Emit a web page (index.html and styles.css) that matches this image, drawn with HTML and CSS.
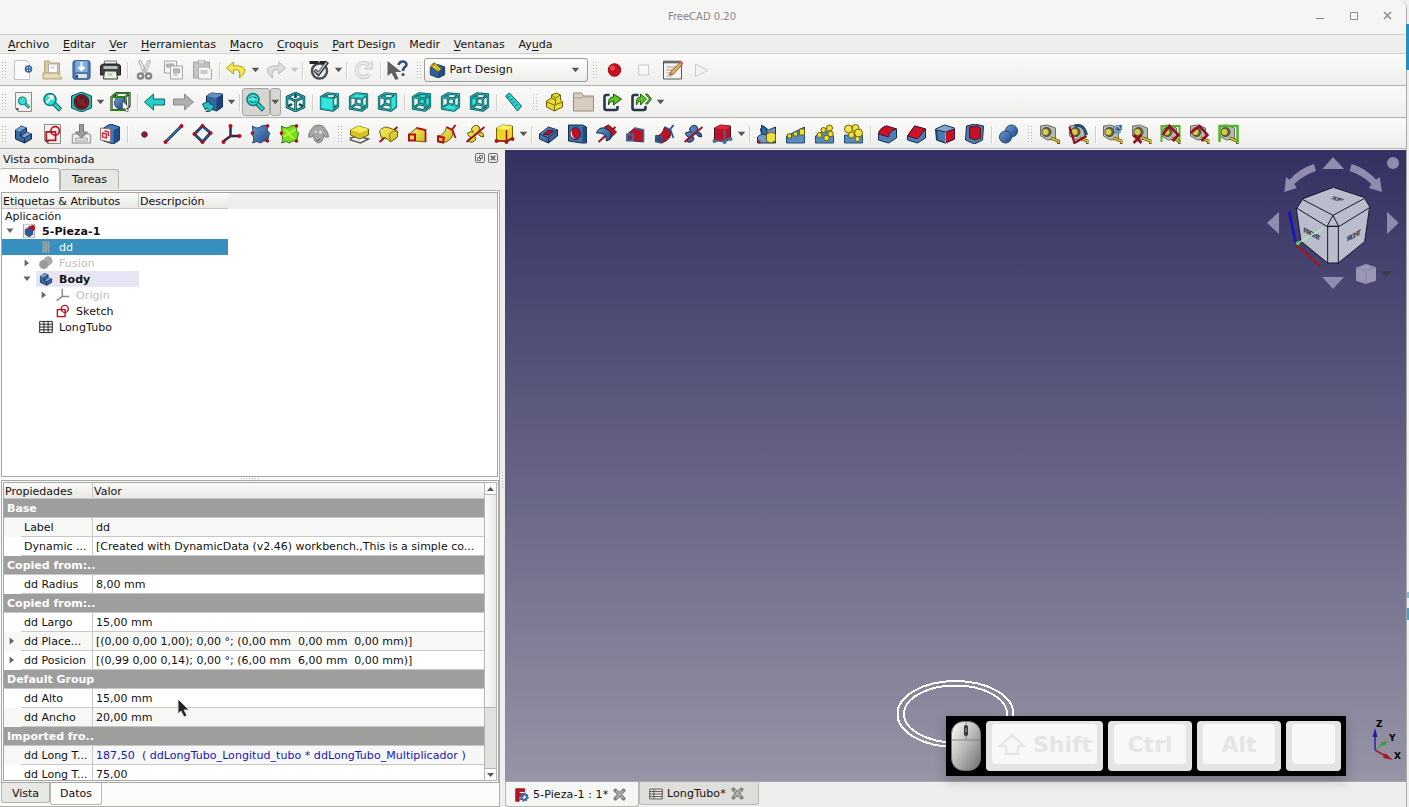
FILE: index.html
```html
<!DOCTYPE html>
<html lang="es">
<head>
<meta charset="utf-8">
<title>FreeCAD 0.20</title>
<link rel="stylesheet" href="styles.css">
</head>
<body>
<svg class="defs" width="0" height="0">
<defs>
<linearGradient id="gy" x2="1" y2="1"><stop offset="0" stop-color="#fcf36a"/><stop offset="1" stop-color="#c9b81a"/></linearGradient>
<linearGradient id="gb" x2="1" y2="1"><stop offset="0" stop-color="#6b9bd0"/><stop offset="1" stop-color="#204a87"/></linearGradient>
<linearGradient id="gm" x2="1" y2="1"><stop offset="0" stop-color="#fff"/><stop offset=".5" stop-color="#b8b8b6"/><stop offset="1" stop-color="#6d6d6b"/></linearGradient>
<symbol id="new" viewBox="0 0 20 20"><path d="M1 .5h12l3 3v16H1z" fill="#fbfbfb" stroke="#c4c4c2"/><circle cx="15" cy="9" r="3" fill="#fff" stroke="#3c6499" stroke-width="1.600"/><path d="M15 6v6M12 9h6" stroke="#3c6499" stroke-width="1.500"/></symbol>
<symbol id="open" viewBox="0 0 20 20"><path d="M2 1h5l1 2h9v12H2z" fill="#d9c9a2" stroke="#b5a37a"/><path d="M6 4h9v9H6z" fill="#fff" stroke="#aaa"/><path d="M8 6h4v3H8z" fill="#ddd"/><path d="M.5 13h15l4 6h-19z" fill="#e2d3ae" stroke="#b5a37a"/><path d="M2 16h15" stroke="#fff" stroke-dasharray="1 1"/></symbol>
<symbol id="save" viewBox="0 0 20 20"><rect x="1.500" y=".7" width="17" height="18.500" rx="2" fill="#4a80bd" stroke="#234a7e"/><path d="M4 1h12v11H4z" fill="#86add8"/><path d="M10 2v7M7 7l3 3 3-3" fill="none" stroke="#fff" stroke-width="2"/><path d="M4 13.500h12v5H4z" fill="#dfe5ec" stroke="#2d5387" stroke-width=".7"/><path d="M5.500 15v3" stroke="#204a87" stroke-width="2"/></symbol>
<symbol id="print" viewBox="0 0 20 20"><path d="M4 1h12v6H4z" fill="#eee" stroke="#777"/><path d="M0 6q1-2 3-2h14q2 0 3 2v9H0z" fill="#3c4042" stroke="#1d1f20"/><path d="M3 6h14v3H3z" fill="#bbb"/><path d="M4 11h12l1 8H3z" fill="#edf3e9" stroke="#333"/><path d="M7 13l5 3M12 13l-5 3" stroke="#9bc782" stroke-width="1"/></symbol>
<symbol id="cut" viewBox="0 0 20 20"><path d="M4 1l2-1 5 10-2 3zM16 1l-2-1L9 10l2 3z" fill="#ededec" stroke="#aaa"/><g fill="none" stroke="#858585" stroke-width="2.500"><circle cx="6" cy="16" r="2.600"/><circle cx="14" cy="16" r="2.600"/></g></symbol>
<symbol id="copy" viewBox="0 0 20 20"><g fill="#f5f5f5" stroke="#a5a5a3"><path d="M1 1h12v12H1z"/><path d="M3 4h7v3H3z" fill="#bbb"/><path d="M7 6h12v13H7z"/><path d="M10 9h6v4h-6z" fill="#bbb"/><path d="M10 15h4"/></g></symbol>
<symbol id="paste" viewBox="0 0 20 20"><path d="M1 2h16v16H1z" fill="#c6c6c4" stroke="#a0a09e"/><path d="M6 0h6v4H6z" fill="#ddd" stroke="#aaa"/><path d="M6 7h10l3 3v9H6z" fill="#f4f4f4" stroke="#aaa"/><path d="M8 10h7v4H8z" fill="#c9c9c8"/></symbol>
<symbol id="undo" viewBox="0 0 20 20"><path d="M7 2L0 8l7 6v-4q8-2 6 8 9-8 3-11-4-2-9-1z" fill="#f4e45c" stroke="#b4a000"/></symbol>
<symbol id="redo" viewBox="0 0 20 20"><path d="M13 2l7 6-7 6v-4q-8-2-6 8-9-8-3-11 4-2 9-1z" fill="#dededd" stroke="#b5b5b4"/></symbol>
<symbol id="valid" viewBox="0 0 20 20"><circle cx="10" cy="11" r="7.500" fill="#f0f0ef" stroke="#484e53" stroke-width="2.400"/><path d="M0 1h9v3H0zM10 1l7 0v3h-7z" fill="#22272b"/><path d="M5 10l4 4 9-12" fill="none" stroke="#31373b" stroke-width="3.600"/><path d="M5.500 10.500l3.500 3 8-11" fill="none" stroke="#b9bdbf" stroke-width="1.500"/></symbol>
<symbol id="refresh" viewBox="0 0 20 20"><path d="M15 5A7 7 0 1 0 16 14" fill="none" stroke="#cbcbca" stroke-width="4"/><path d="M15 5A7 7 0 1 0 16 14" fill="none" stroke="#ececeb" stroke-width="2"/><path d="M11 9h8V1z" fill="#e9e9e8" stroke="#cbcbca"/></symbol>
<symbol id="what" viewBox="0 0 20 20"><path d="M0 1v15l4-3 4 7 3-1-3-7h6z" fill="#5e6161"/><path d="M11 5q1-4 5-3.500 4 1 2.500 4.500-3 2-3 5" fill="none" stroke="#31517b" stroke-width="2.600"/><circle cx="15.500" cy="14.500" r="1.600" fill="#31517b"/></symbol>
<symbol id="rec" viewBox="0 0 20 20"><circle cx="10" cy="10" r="6.300" fill="#cc0c1f" stroke="#981020"/><circle cx="8" cy="8" r="2.500" fill="#e34a50"/></symbol>
<symbol id="stop" viewBox="0 0 20 20"><path d="M5 5h10v10H5z" fill="#f8f8f7" stroke="#c9c9c8"/></symbol>
<symbol id="macro" viewBox="0 0 20 20"><path d="M1 2h18v17H1z" fill="#f4f4f2" stroke="#555"/><path d="M1 2h18" stroke="#333" stroke-width="3" stroke-dasharray="1 1"/><path d="M4 7h9M4 10h7M4 13h4M4 16h6" stroke="#999"/><path d="M7 15l2-4 9-9 2 2-9 10z" fill="#e9b06a" stroke="#8b5a18"/><path d="M17 3l2-2 2 2-2 2z" fill="#d66"/></symbol>
<symbol id="play" viewBox="0 0 20 20"><path d="M4 4l12 6.500-12 6z" fill="#f3f3f2" stroke="#c9c9c8"/></symbol>
<symbol id="pdcube" viewBox="0 0 20 20"><path d="M1 7l9-4 9 3v10l-8 4-10-4z" fill="#315f9b" stroke="#102845"/><path d="M11 9l8-3v10l-8 4z" fill="#214a84"/><path d="M1 5l5-4 9 8-4 3z" fill="#eedb39" stroke="#675800"/><path d="M4 2l8 8M7 1L3 6" stroke="#675800"/></symbol>
<symbol id="mag" viewBox="0 0 20 20"><path d="M11 11l7 7" stroke="#0b5f60" stroke-width="4.600"/><path d="M11 11l6.500 6.500" stroke="#29cfca" stroke-width="2.800"/><circle cx="7.500" cy="7.500" r="6" fill="#35ddd6" stroke="#12797a" stroke-width="1.600"/></symbol>
<symbol id="fit" viewBox="0 0 20 20"><path d="M2 .5h16v19H5l-3-3z" fill="#f0f0ef" stroke="#8b8b89"/><path d="M2 16h3v3.500z" fill="#555"/><use href="#mag" x="4" y="4" width="13" height="13"/></symbol>
<symbol id="fitsel" viewBox="0 0 20 20"><use href="#mag"/><path d="M4 11l5-6M6 4h4v4" stroke="#fff" stroke-width="1.800" fill="none"/></symbol>
<symbol id="sync" viewBox="0 0 20 20"><use href="#mag"/><path d="M4 6.500q3-3 7 0M11 9q-3 3-7 0" stroke="#14797a" stroke-width="1.200" fill="none"/><path d="M4 8q3-4 6 0" stroke="#d9ffff" stroke-width="1" fill="none"/></symbol>
<symbol id="style" viewBox="0 0 20 20"><path d="M10 0l10 4v12l-10 4-10-4V4z" fill="#21b8b4" stroke="#07595b"/><circle cx="10" cy="10" r="6.200" fill="#4d3136" stroke="#400d14" stroke-width="3.200"/><circle cx="10" cy="10" r="6.200" fill="none" stroke="#9c1321" stroke-width="1.600"/><path d="M5.500 5.500l9 9" stroke="#a61322" stroke-width="2.400"/></symbol>
<symbol id="bbox" viewBox="0 0 20 20"><circle cx="10" cy="11" r="6" fill="url(#gb)" stroke="#172b47"/><path d="M1 5l5-4h13v13l-4 4H1zM1 5h14v13M15 5l4-4M6 1v13" fill="none" stroke="#153d12" stroke-width="2.200"/><path d="M1 5l5-4h13v13l-4 4H1zM1 5h14v13M15 5l4-4M6 1v13" fill="none" stroke="#44ae31"/><circle cx="9" cy="11" r="5" fill="url(#gb)"/><path d="M12 9v9l2-2 2 4 2-1-2-3h3z" fill="#fff" stroke="#333" stroke-width=".6"/></symbol>
<symbol id="left" viewBox="0 0 20 20"><path d="M0 10l9-8v5h11v6H9v5z" fill="#27cdc7" stroke="#0a6768"/></symbol>
<symbol id="right" viewBox="0 0 20 20"><path d="M20 10l-9-8v5H0v6h11v5z" fill="#b0b0af" stroke="#8c8c8b"/></symbol>
<symbol id="linked" viewBox="0 0 20 20"><path d="M4 4l5-3 11 1v13l-6 4-10-4z" fill="#3465a4" stroke="#12294a"/><path d="M14 6l6-4v13l-6 4z" fill="#1f4379"/><path d="M4 4l5-3 11 1-6 4z" fill="#6790c1"/><path d="M0 12l7-3v3q6 0 3 5-2 3-7 3 5-3 1-4l-1 2z" fill="#24c7c1" stroke="#0b5658"/></symbol>
<symbol id="iso" viewBox="0 0 20 20"><path d="M10 1l8.500 4v10L10 19l-8.500-4V5z" fill="#eef5f4"/><path d="M10 1l8.500 4v10L10 19l-8.500-4V5zM10 1v5M10 13v-3M1.500 15l5-3M18.500 15l-5-3M1.500 5l8.500 4 8.500-4M10 9v10" fill="none" stroke="#075052" stroke-width="2.600" stroke-linejoin="round"/><path d="M10 1l8.500 4v10L10 19l-8.500-4V5zM1.500 5l8.500 4 8.500-4M10 9v10" fill="none" stroke="#2bbdb9" stroke-width="1"/></symbol>
<symbol id="wire" viewBox="0 0 20 20"><path d="M1.500 5l6-3.500 11 1v12l-5 4-12-2zM1.500 5l12 1.500v12M13.500 6.500l5-4M7.500 1.500v10.500l11 2.500M7.500 12l-6 4.500" fill="none" stroke="#075052" stroke-width="2.500" stroke-linejoin="round"/><path d="M1.500 5l6-3.500 11 1v12l-5 4-12-2zM1.500 5l12 1.500v12M13.500 6.500l5-4M7.500 1.500v10.500l11 2.500M7.500 12l-6 4.500" fill="none" stroke="#2bbdb9" stroke-width="1"/></symbol>
<symbol id="vfront" viewBox="0 0 20 20"><use href="#wire"/><path d="M1.500 5l12 1.500v12l-12-2z" fill="#33e5de" stroke="#1b9d9b"/></symbol>
<symbol id="vtop" viewBox="0 0 20 20"><use href="#wire"/><path d="M2.500 5l5-3 10 1-4 3z" fill="#33e5de" stroke="#1b9d9b" stroke-width=".6"/></symbol>
<symbol id="vright" viewBox="0 0 20 20"><use href="#wire"/><path d="M13.500 6.500l5-4v12l-5 4z" fill="#33e5de" stroke="#1b9d9b"/></symbol>
<symbol id="vrear" viewBox="0 0 20 20"><path d="M7.500 1.500l11 1v12l-11-2.500z" fill="#33e5de"/><use href="#wire"/></symbol>
<symbol id="vbottom" viewBox="0 0 20 20"><use href="#wire"/><path d="M3 16l5-3 9 2-4 3z" fill="#33e5de"/></symbol>
<symbol id="vleft" viewBox="0 0 20 20"><path d="M1.500 5l6-3.500V12l-6 4.500z" fill="#33e5de"/><use href="#wire"/></symbol>
<symbol id="ruler" viewBox="0 0 20 20"><path d="M2 4l4-3 12 13-4 5z" fill="#2ccfca" stroke="#09696b"/><path d="M6 4L4 6M9 7L7 8M11 10l-2 1M14 12l-2 2" stroke="#09696b"/></symbol>
<symbol id="part" viewBox="0 0 20 20"><path d="M2 9l5-3V3l5-2 4 2v5l2 2v5l-8 4-8-4z" fill="#e6d936" stroke="#695e00" stroke-linejoin="round"/><path d="M2 10l8 3 8-3M7 6l4 2v4M11 6l5-3M7 3l4 3v3M10 13v6" fill="none" stroke="#796d08"/></symbol>
<symbol id="folder" viewBox="0 0 20 20"><path d="M0 1h8l2 3h10v15H0z" fill="#d7ccbd" stroke="#998c7b"/><path d="M1 6h6l2-1h10" fill="none" stroke="#b1a18c"/></symbol>
<symbol id="link" viewBox="0 0 20 20"><path d="M7 3H4q-2 0-2 2v11q0 2 2 2h9q2 0 2-2v-2" fill="none" stroke="#26374d" stroke-width="2.600"/><path d="M6 13q-1-8 5-8V2l8 5-8 6V9q-4 0-5 4z" fill="#5bc421" stroke="#1d520c"/></symbol>
<symbol id="links" viewBox="0 0 20 20"><path d="M7 3H3q-2 0-2 2v11q0 2 2 2h9q2 0 2-2v-2" fill="none" stroke="#26374d" stroke-width="2.600"/><path d="M5 13q-1-8 4-8V2l6 5-6 6V9q-3 0-4 4zM14 2h2l4 5-4 5h-2l4-5z" fill="#5bc421" stroke="#1d520c" stroke-width=".9"/></symbol>
<symbol id="body" viewBox="0 0 20 20"><path d="M2 6l6-4 5 2v4l5 2v5l-7 4-9-4z" fill="#3568a8" stroke="#10233c" stroke-linejoin="round"/><path d="M2 6l5 2 6-4-5-2zM7 12l4 2 7-4-5-2z" fill="#75a0cf"/><path d="M7 8v4l4 2v5M7 8l6-4M11 14l7-4M7 12l6-4" fill="none" stroke="#163153"/></symbol>
<symbol id="sk" viewBox="0 0 20 20"><path d="M2 8h11v10H2z" fill="none" stroke="#c20d20" stroke-width="2"/><circle cx="12.500" cy="7" r="5" fill="none" stroke="#c20d20" stroke-width="2"/></symbol>
<symbol id="sketch" viewBox="0 0 20 20"><path d="M2 .5h16v19H5l-3-3z" fill="#f2f1f0" stroke="#8d8b8a"/><path d="M2 16h4v4z" fill="#555"/><use href="#sk" x="2" y="1" width="17" height="17"/></symbol>
<symbol id="attach" viewBox="0 0 20 20"><path d="M2 10h16l1 1v8H1v-8z" fill="#f3f3f3" stroke="#aaa" stroke-width="1.600"/><path d="M4 14h12v3H4z" fill="#ddd" stroke="#aaa"/><path d="M8 0h4v8h4l-6 6-6-6h4z" fill="#999" stroke="#777"/></symbol>
<symbol id="map" viewBox="0 0 20 20"><path d="M3 4l7-4 9 3v13l-6 4-10-3z" fill="#467bb8" stroke="#132a4a"/><path d="M13 6l6-3v13l-6 4z" fill="#244d86"/><path d="M0 4l10 1v13L0 16z" fill="#f4f0ef" stroke="#8a7575"/><path d="M2 9l4 1v4l-4-1zM4 7l4 1v4" fill="none" stroke="#cb2434" stroke-width="1.300"/></symbol>
<symbol id="point" viewBox="0 0 20 20"><circle cx="10" cy="10.500" r="2.800" fill="#b50c20" stroke="#283f73"/></symbol>
<symbol id="line" viewBox="0 0 20 20"><path d="M2 18L18 2" stroke="#102c4d" stroke-width="2.800"/><path d="M2 18L18 2" stroke="#4677ad" stroke-width="1.200"/><g fill="#b50c20"><circle cx="2" cy="18" r="2"/><circle cx="18" cy="2" r="2"/></g></symbol>
<symbol id="plane" viewBox="0 0 20 20"><path d="M10 2l8 7-8 9-8-8z" fill="#f5f5f4" stroke="#102c4d" stroke-width="2.800"/><path d="M10 2l8 7-8 9-8-8z" fill="none" stroke="#4677ad"/><g fill="#b50c20"><circle cx="10" cy="2" r="2"/><circle cx="18" cy="9" r="2"/><circle cx="10" cy="18" r="2"/><circle cx="2" cy="10" r="2"/></g></symbol>
<symbol id="cs" viewBox="0 0 20 20"><path d="M9 2v10l9 0M9 12l-8 6" fill="none" stroke="#1d2b46" stroke-width="2.400"/><g fill="#b50c20"><circle cx="9" cy="2" r="2"/><circle cx="18" cy="12" r="2"/><circle cx="2" cy="18" r="2"/><circle cx="9" cy="12" r="1.600"/></g></symbol>
<symbol id="binder" viewBox="0 0 20 20"><path d="M2 2q5 4 9 0l7-1q-3 5 1 8l-2 8q-4-1-7 2-3-3-8 0 3-5-1-9 2-3 1-8z" fill="url(#gb)" stroke="#234472"/><g fill="#b50c20"><circle cx="17" cy="2" r="1.800"/><circle cx="2" cy="9" r="1.800"/><circle cx="17" cy="17" r="1.800"/></g></symbol>
<symbol id="sub" viewBox="0 0 20 20"><path d="M2 2q5 4 9 0l7-1q-3 5 1 8l-2 8q-4-1-7 2-3-3-8 0 3-5-1-9 2-3 1-8z" fill="#75df1a" stroke="#307011"/><path d="M5 5l9 10M4 13L16 5" stroke="#b9f23f" stroke-width="2"/><g fill="#b50c20"><circle cx="17" cy="2" r="1.800"/><circle cx="2" cy="9" r="1.800"/><circle cx="17" cy="17" r="1.800"/></g></symbol>
<symbol id="clone" viewBox="0 0 20 20"><path d="M4 4q1-3 6-3t6 3q4 4 4 9-4 1-5-2 0 7-5 8-5-1-5-8-1 3-5 2 0-5 4-9z" fill="#a6a7a7" stroke="#7b7d7d"/><circle cx="7" cy="8" r="1" fill="#eee"/><circle cx="12" cy="8" r="1.500" fill="#eee"/><path d="M8 16q2 1 4-1" stroke="#555" fill="none"/></symbol>
<symbol id="pad" viewBox="0 0 20 20"><path d="M1 14l7-2 11 3-8 4-10-3z" fill="#f5f5f4" stroke="#59595a" stroke-width="1.500"/><path d="M1 6l8-4 10 3v6l-9 4-9-4z" fill="#d4c328" stroke="#6b6007"/><path d="M1 6l8-4 10 3-8 4z" fill="#f5ec56"/></symbol>
<symbol id="rev" viewBox="0 0 20 20"><path d="M1 18L19 3" stroke="#a40f20" stroke-width="2"/><path d="M1 7q5-6 10-3l8 3v6l-7 5q-5-6-9-4z" fill="url(#gy)" stroke="#6b6007"/><path d="M11 10q4-4 8-3M11 10l1 8" fill="none" stroke="#887c10"/></symbol>
<symbol id="loft" viewBox="0 0 20 20"><path d="M2 10l7-6 9 2v12L8 17z" fill="url(#gy)" stroke="#6b6007"/><path d="M9 4l9 2v12" fill="none" stroke="#b10f22" stroke-width="1.800"/><path d="M1.500 10.500h6v6h-6z" fill="#efe04a" stroke="#b10f22" stroke-width="2"/></symbol>
<symbol id="pipe" viewBox="0 0 20 20"><path d="M1 12q7 0 9-9l6 4q2 8-9 12z" fill="url(#gy)" stroke="#6b6007"/><path d="M10 3l6 3 3 8" fill="none" stroke="#b10f22" stroke-width="1.800"/><path d="M1.500 12.500l6 1-1 5-5-1zM16 5l3-4" fill="#dccc3a" stroke="#b10f22" stroke-width="2"/></symbol>
<symbol id="helix" viewBox="0 0 20 20"><path d="M6 5q2-5 7-3 3 3 0 6 6 0 5 5-4 0-5-3-3-1-4 2 3 3 0 5-4 3-7-1 3 0 3-3-3-1-3-4 4-2 6-1-2-1-2-3z" fill="url(#gy)" stroke="#605709"/><path d="M1 18L19 3" stroke="#a40f20" stroke-width="1.800"/></symbol>
<symbol id="prim" viewBox="0 0 20 20"><path d="M2 4l6-3 10 1v13l-6 3-10-2z" fill="#ead829" stroke="#6b6007"/><path d="M2 4l6-3 10 1-5 4z" fill="#fbf367"/><path d="M2 17h10l6-3M12 18V6" fill="none" stroke="#941021" stroke-width="1.500"/><g fill="#b10f22"><circle cx="2" cy="17" r="2"/><circle cx="18" cy="15" r="2"/><circle cx="12" cy="18" r="2"/></g></symbol>
<symbol id="pocket" viewBox="0 0 20 20"><path d="M1 10l9-7 9 3v6l-9 7-9-4z" fill="url(#gb)" stroke="#142c4c"/><path d="M1 10l9 4 9-8M10 14v5" stroke="#142c4c" fill="none"/><path d="M5 10l5-4 5 1-5 4z" fill="#b61226" stroke="#441323"/></symbol>
<symbol id="hole" viewBox="0 0 20 20"><path d="M1 1h14l4 2v16h-5L1 17z" fill="#3d6fab" stroke="#142c4c"/><path d="M15 3h4v16h-4z" fill="#234b82"/><ellipse cx="8" cy="9.500" rx="5" ry="6" fill="#bd1024" stroke="#172f50"/><path d="M4 6q0 7 4 9-5-1-5-6z" fill="#eee"/></symbol>
<symbol id="groove" viewBox="0 0 20 20"><path d="M2 18L19 3" stroke="#a40f20" stroke-width="2"/><path d="M8 3l4-2 8 7-6 6z" fill="#be1225" stroke="#511120"/><path d="M0 9q2-6 8-5 9 3 6 11l-4 2q0-9-10-8z" fill="url(#gb)" stroke="#142c4c"/></symbol>
<symbol id="sloft" viewBox="0 0 20 20"><path d="M2 10l7-6 9 2v12L8 17z" fill="#b81326" stroke="#2d3258"/><path d="M9 4l9 2v12" fill="none" stroke="#3869a2" stroke-width="1.600"/><path d="M1.500 10.500h6v6h-6z" fill="#8d2038" stroke="#3869a2" stroke-width="2"/></symbol>
<symbol id="spipe" viewBox="0 0 20 20"><path d="M1 12q7 0 9-9l6 4q2 8-9 12z" fill="#bd1226" stroke="#431424"/><path d="M10 3l6 3 3 8" fill="none" stroke="#31588a" stroke-width="1.800"/><path d="M1.500 12.500l6 1-1 5-5-1zM16 5l3-4" fill="#49406a" stroke="#31588a" stroke-width="2"/></symbol>
<symbol id="shelix" viewBox="0 0 20 20"><path d="M6 5q2-5 7-3 3 3 0 6 6 0 5 5-4 0-5-3-3-1-4 2 3 3 0 5-4 3-7-1 3 0 3-3-3-1-3-4 4-2 6-1-2-1-2-3z" fill="url(#gb)" stroke="#152b4b"/><path d="M1 18L19 3" stroke="#a40f20" stroke-width="1.800"/></symbol>
<symbol id="sprim" viewBox="0 0 20 20"><path d="M2 4l6-3 10 1v13l-6 3-10-2z" fill="#be1024" stroke="#421323"/><path d="M2 4l6-3 10 1-5 4z" fill="#db2637"/><path d="M2 17h10l6-3M12 18V6" fill="none" stroke="#58688b" stroke-width="1.500"/><g fill="#426b9f"><circle cx="2" cy="17" r="2"/><circle cx="18" cy="15" r="2"/><circle cx="12" cy="18" r="2"/></g></symbol>
<symbol id="mirror" viewBox="0 0 20 20"><path d="M4 5l3-3 5 4 7-3v16H1v-6l4-3z" fill="#6d9ac6" stroke="#16345a"/><path d="M5 1l5 4 1 6-6-1z" fill="#3769a6" stroke="#16345a"/><path d="M1 16l3 3" stroke="#b51023" stroke-width="2"/><path d="M10 10l5-2 4 2v7l-5 2-4-2z" fill="#efdf40" stroke="#6b6007"/></symbol>
<symbol id="linear" viewBox="0 0 20 20"><path d="M1 12l18-9v16H1z" fill="#5b8bbd" stroke="#244c7d"/><g fill="#eedf36" stroke="#6b6007"><path d="M2 10h4v4H2zM8 8h4v4H8zM14 5h5v6h-5z"/></g></symbol>
<symbol id="polar" viewBox="0 0 20 20"><path d="M1 12l9-6 9 6v7H1z" fill="#5b8bbd" stroke="#244c7d"/><g fill="#eedf36" stroke="#6b6007"><circle cx="5" cy="11" r="2.500"/><circle cx="9" cy="6" r="2.500"/><circle cx="15" cy="4" r="3"/><circle cx="16" cy="10" r="2.800"/><circle cx="12" cy="14" r="2.800"/></g></symbol>
<symbol id="multi" viewBox="0 0 20 20"><path d="M1 11h18v8H1z" fill="#5b8bbd" stroke="#244c7d"/><g fill="#f0e342" stroke="#6b6007"><circle cx="5" cy="5" r="4"/><circle cx="12" cy="4" r="3.500"/><circle cx="15" cy="9" r="4"/><circle cx="8" cy="11" r="3"/><circle cx="14" cy="15" r="2.500"/></g></symbol>
<symbol id="fillet" viewBox="0 0 20 20"><path d="M1 10q1-6 8-8l10 3v9l-8 5-10-3z" fill="#4c7fb9" stroke="#142c4c"/><path d="M1 10q1-6 8-8l10 3q-7 1-8 8z" fill="#cb1227" stroke="#551224"/></symbol>
<symbol id="chamfer" viewBox="0 0 20 20"><path d="M1 12l7-10 11 3v9l-8 5-10-3z" fill="#4c7fb9" stroke="#142c4c"/><path d="M1 12l7-10 11 3-8 10z" fill="#cb1227" stroke="#551224"/></symbol>
<symbol id="draft" viewBox="0 0 20 20"><path d="M0 5l9-4 10 3v11l-9 4-9-3z" fill="#7fa8d2" stroke="#142c4c"/><path d="M10 8l9-3v10l-9 4z" fill="#c31125" stroke="#551224"/><path d="M1 6l9 2v11l-8-3z" fill="#4779b3" stroke="#142c4c"/><path d="M10 8v11" stroke="#82a9d2"/></symbol>
<symbol id="thick" viewBox="0 0 20 20"><path d="M2 2l8-2 9 2-1 14-8 4-9-4z" fill="#4e80b8" stroke="#142c4c"/><path d="M5 3l8-1 3 2v10l-5 2-6-2z" fill="#c31125" stroke="#551224"/></symbol>
<symbol id="bool" viewBox="0 0 20 20"><circle cx="13" cy="7" r="6" fill="url(#gb)" stroke="#204575"/><circle cx="7" cy="13" r="6" fill="url(#gb)" stroke="#204575"/></symbol>
<symbol id="tape" viewBox="0 0 20 20"><path d="M1 2l7-1 8 3v11l-8 1-7-4z" fill="#b7b8b0" stroke="#6a6c65"/><circle cx="7" cy="8" r="4.500" fill="#626138" stroke="#4a4b3d"/><circle cx="6" cy="8" r="3" fill="#d9cc45"/><path d="M11 14l8 3v3" fill="none" stroke="#5b5110" stroke-width="3"/><path d="M11 14l8 3v2" fill="none" stroke="#e1c82f" stroke-width="1.500"/></symbol>
<symbol id="tape2" viewBox="0 0 20 20"><use href="#tape"/><path d="M1 3l5 16 12-7" fill="none" stroke="#8e1020" stroke-width="2.200"/><path d="M6 2q9-3 12 9" fill="none" stroke="#254c75" stroke-width="3"/></symbol>
<symbol id="taper" viewBox="0 0 20 20"><use href="#tape"/><path d="M18 5q-3-5-6-1 0 6 6 3M18 1v4h-4" fill="none" stroke="#35608e" stroke-width="2.600"/><path d="M18 5q-3-5-6-1 0 6 6 3" fill="none" stroke="#9bc0e1" stroke-width="1.300"/></symbol>
<symbol id="tapex" viewBox="0 0 20 20"><use href="#tape"/><path d="M2 11l8 8M10 11l-8 8" stroke="#970d1e" stroke-width="2.500"/></symbol>
<symbol id="tapea" viewBox="0 0 20 20"><use href="#tape"/><path d="M1 18V2h18v16" fill="none" stroke="#53b529" stroke-width="2"/><path d="M2 11l7-9 9 9-6 6" fill="none" stroke="#921022" stroke-width="2.500"/></symbol>
<symbol id="taped" viewBox="0 0 20 20"><use href="#tape"/><path d="M1 9l9-7 8 9-6 6" fill="none" stroke="#921022" stroke-width="2.500"/></symbol>
<symbol id="tapeg" viewBox="0 0 20 20"><use href="#tape"/><path d="M1 18V2h18v16" fill="none" stroke="#53b529" stroke-width="2.500"/></symbol>
<symbol id="sheet" viewBox="0 0 20 20"><path d="M1 2h18v16H1zM1 6h18M1 10h18M1 14h18M7 2v16M13 2v16" fill="#fff" stroke="#222" stroke-width="1.400"/></symbol>
<symbol id="fclogo" viewBox="0 0 20 20"><path d="M1 1h13v4H6v3h6v4H6v7H1z" fill="#c30e22" stroke="#6c0e1b"/><circle cx="13" cy="13" r="4" fill="none" stroke="#42669e" stroke-width="3"/><circle cx="13" cy="13" r="5.700" fill="none" stroke="#42669e" stroke-width="2" stroke-dasharray="2 2.400"/></symbol>
<symbol id="cls" viewBox="0 0 12 12"><path d="M2.200 2.200l7.600 7.600M9.800 2.200L2.200 9.800" stroke="#7b7d79" stroke-width="3.400" stroke-linecap="round"/><path d="M2.600 2.600l6.800 6.800M9.400 2.600L2.600 9.400" stroke="#b9bab7" stroke-width="1.300"/></symbol>
</defs>
</svg>
<div class="window">
  <header class="titlebar"><span class="title">FreeCAD 0.20</span>
    <svg class="winbtns" viewBox="0 0 80 14"><path d="M1 9.500h8" /><path d="M35.500 3.500h7v7h-7z"/><path d="M69 3l7 7M76 3l-7 7" stroke-width="1.500"/></svg>
  </header>
  <nav class="menubar"><span><u>A</u>rchivo</span><span><u>E</u>ditar</span><span><u>V</u>er</span><span><u>H</u>erramientas</span><span><u>M</u>acro</span><span><u>C</u>roquis</span><span><u>P</u>art Design</span><span>Medir</span><span><u>V</u>entanas</span><span>Ay<u>u</u>da</span></nav>
  <div class="toolbar t1"><i class="grip first"></i><svg><use href="#new"/></svg><svg><use href="#open"/></svg><svg><use href="#save"/></svg><svg><use href="#print"/></svg><i class="sep"></i><svg><use href="#cut"/></svg><svg><use href="#copy"/></svg><svg><use href="#paste"/></svg><i class="sep"></i><svg><use href="#undo"/></svg><i class="arr"></i><svg><use href="#redo"/></svg><i class="arr off"></i><i class="sep"></i><svg><use href="#valid"/></svg><i class="arr"></i><i class="sep"></i><svg><use href="#refresh"/></svg><i class="sep"></i><svg><use href="#what"/></svg><i class="grip"></i><div class="combo"><svg><use href="#pdcube"/></svg><span>Part Design</span><i class="arr"></i></div><i class="grip"></i><svg><use href="#rec"/></svg><svg><use href="#stop"/></svg><svg><use href="#macro"/></svg><svg><use href="#play"/></svg></div>
  <div class="toolbar t2"><i class="grip first"></i><svg><use href="#fit"/></svg><svg><use href="#fitsel"/></svg><svg><use href="#style"/></svg><i class="arr"></i><svg><use href="#bbox"/></svg><i class="sep"></i><svg><use href="#left"/></svg><svg><use href="#right"/></svg><svg><use href="#linked"/></svg><i class="arr"></i><i class="sep"></i><span class="pressed"><svg><use href="#sync"/></svg></span><span class="pressed drop"><i class="arr"></i></span><svg><use href="#iso"/></svg><i class="sep"></i><svg><use href="#vfront"/></svg><svg><use href="#vtop"/></svg><svg><use href="#vright"/></svg><i class="sep"></i><svg><use href="#vrear"/></svg><svg><use href="#vbottom"/></svg><svg><use href="#vleft"/></svg><i class="sep"></i><svg><use href="#ruler"/></svg><i class="grip"></i><svg><use href="#part"/></svg><svg><use href="#folder"/></svg><svg><use href="#link"/></svg><svg><use href="#links"/></svg><i class="arr"></i></div>
  <div class="toolbar t3"><i class="grip first"></i><svg><use href="#body"/></svg><svg><use href="#sketch"/></svg><svg><use href="#attach"/></svg><svg><use href="#map"/></svg><i class="sep"></i><svg><use href="#point"/></svg><svg><use href="#line"/></svg><svg><use href="#plane"/></svg><svg><use href="#cs"/></svg><svg><use href="#binder"/></svg><svg><use href="#sub"/></svg><svg><use href="#clone"/></svg><i class="grip"></i><svg><use href="#pad"/></svg><svg><use href="#rev"/></svg><svg><use href="#loft"/></svg><svg><use href="#pipe"/></svg><svg><use href="#helix"/></svg><svg><use href="#prim"/></svg><i class="arr"></i><i class="sep"></i><svg><use href="#pocket"/></svg><svg><use href="#hole"/></svg><svg><use href="#groove"/></svg><svg><use href="#sloft"/></svg><svg><use href="#spipe"/></svg><svg><use href="#shelix"/></svg><svg><use href="#sprim"/></svg><i class="arr"></i><i class="sep"></i><svg><use href="#mirror"/></svg><svg><use href="#linear"/></svg><svg><use href="#polar"/></svg><svg><use href="#multi"/></svg><i class="sep"></i><svg><use href="#fillet"/></svg><svg><use href="#chamfer"/></svg><svg><use href="#draft"/></svg><svg><use href="#thick"/></svg><i class="sep"></i><svg><use href="#bool"/></svg><i class="grip"></i><svg><use href="#tape"/></svg><svg><use href="#tape2"/></svg><i class="sep"></i><svg><use href="#taper"/></svg><svg><use href="#tapex"/></svg><svg><use href="#tapea"/></svg><svg><use href="#taped"/></svg><svg><use href="#tapeg"/></svg></div>
  <main class="main">
    <aside class="dock">
      <div class="docktitle"><span>Vista combinada</span><svg class="dockbtns" viewBox="0 0 24 10"><g fill="none" stroke="#6f706d"><rect x=".5" y=".5" width="9" height="9" rx="1.500"/><rect x="13.500" y=".5" width="9" height="9" rx="1.500"/><path d="M4.500 2.500h3v3h-3zM2.500 4.500h3v3h-3z"/><path d="M15.800 2.800l4.400 4.400M20.200 2.800l-4.400 4.400" stroke-width="1.800"/></g></svg></div>
      <div class="tabs"><span class="tab on">Modelo</span><span class="tab off">Tareas</span></div>
      <div class="pane">
        <div class="tree">
          <div class="treehead"><span class="h1">Etiquetas &amp; Atributos</span><span class="h2">Descripción</span></div>
          <div class="app">Aplicación</div>
          <div class="node n1"><i class="tri down"></i><svg class="ic" viewBox="0 0 20 20"><path d="M2 0h16v20H2z" fill="#eee" stroke="#888"/><path d="M4 8l6-4 6 3v8l-6 4-6-4z" fill="#2f5790"/><path d="M9 4l7-3 3 4-2 5-6-3z" fill="#bd1024"/></svg><b>5-Pieza-1</b></div>
          <div class="node n2 sel"><svg class="ic" viewBox="0 0 20 20"><path d="M5 2h10v16H5z" fill="#9aa5ab"/><path d="M8 2v16M12 2v16M3 5h3M3 9h3M3 13h3M14 5h3M14 9h3M14 13h3" stroke="#6e8895"/></svg><span>dd</span></div>
          <div class="node n2 dim"><i class="tri"></i><svg class="ic" viewBox="0 0 20 20"><circle cx="13" cy="7" r="6.500" fill="#aaa"/><circle cx="7" cy="12" r="6.500" fill="#999" stroke="#b4b4b4"/></svg><span>Fusion</span></div>
          <div class="node n2 bodyrow"><i class="tri down"></i><svg class="ic"><use href="#body"/></svg><b>Body</b></div>
          <div class="node n3 dim"><i class="tri"></i><svg class="ic" viewBox="0 0 20 20"><path d="M9 1v11h10M9 12l-8 6" fill="none" stroke="#8b8d8b" stroke-width="2.200"/></svg><span>Origin</span></div>
          <div class="node n3"><svg class="ic"><use href="#sk"/></svg><span>Sketch</span></div>
          <div class="node n2"><svg class="ic"><use href="#sheet"/></svg><span>LongTubo</span></div>
        </div>
        <div class="splith"></div>
        <div class="props">
          <div class="grid">
            <div class="row head"><span class="k">Propiedades</span><span class="v">Valor</span></div>
            <div class="row group">Base</div>
            <div class="row alt"><i></i><span class="k">Label</span><span class="v">dd</span></div>
            <div class="row"><i></i><span class="k">Dynamic ...</span><span class="v">[Created with DynamicData (v2.46) workbench.,This is a simple co...</span></div>
            <div class="row group">Copied from:..</div>
            <div class="row"><i></i><span class="k">dd Radius</span><span class="v">8,00 mm</span></div>
            <div class="row group">Copied from:..</div>
            <div class="row"><i></i><span class="k">dd Largo</span><span class="v">15,00 mm</span></div>
            <div class="row alt"><i class="tri"></i><span class="k">dd Place...</span><span class="v">[(0,00 0,00 1,00); 0,00 °; (0,00 mm&nbsp; 0,00 mm&nbsp; 0,00 mm)]</span></div>
            <div class="row"><i class="tri"></i><span class="k">dd Posicion</span><span class="v">[(0,99 0,00 0,14); 0,00 °; (6,00 mm&nbsp; 6,00 mm&nbsp; 0,00 mm)]</span></div>
            <div class="row group">Default Group</div>
            <div class="row"><i></i><span class="k">dd Alto</span><span class="v">15,00 mm</span></div>
            <div class="row alt"><i></i><span class="k">dd Ancho</span><span class="v">20,00 mm</span></div>
            <div class="row group">Imported fro..</div>
            <div class="row alt"><i></i><span class="k">dd Long T...</span><span class="v expr">187,50&nbsp; ( ddLongTubo_Longitud_tubo * ddLongTubo_Multiplicador )</span></div>
            <div class="row"><i></i><span class="k">dd Long T...</span><span class="v">75,00</span></div>
          </div>
          <div class="scroll"><i class="up"></i><i class="thumb"></i><i class="rest"></i><i class="dn"></i></div>
        </div>
        <div class="btabs"><span class="btab">Vista</span><span class="btab on">Datos</span></div>
      </div>
    </aside>
    <div class="splitv"></div>
    <section class="mdi">
      <div class="view">
        <svg class="navcube" viewBox="0 0 462 450">
          <g fill="#8f8cae"><path d="M202 57l32-36 33 36zM36 219l36-34v67zM431 219l-35-34v67zM202 381l32 36 33-36z"/><circle cx="414" cy="39" r="18"/><path d="M177 42l6 21q-37 12-65 39l7 12-37 12 5-45 11 8q29-33 73-47zM290 42l-6 21q37 12 65 39l-7 12 39 12-7-45-11 8q-29-33-73-47z"/></g>
          <path d="M235 112l92 30 17 28-15 105-79 64h-32l-80-65-14-97 20-31z" fill="#b9bdcc" stroke="#14172d" stroke-width="3"/>
          <path d="M144 149l90 47 93-50M126 175l89 54h38l89-55M218 229v110M250 229v110M234 196l-18 33h35z" fill="none" stroke="#14172d" stroke-width="3"/>
          <text transform="matrix(.85 .45 0 1 145 246)" class="face">FRONT</text><text transform="matrix(.8 -.45 0 1 275 276)" class="face">RIGHT</text><text transform="matrix(.9 .25 -.8 .5 223 146)" class="face">TOP</text>
          <path d="M102 184l20 93" stroke="#1713bd" stroke-width="8"/><path d="M123 284l73 65" stroke="#9d1826" stroke-width="7"/><path d="M129 279l76-44" stroke="#adf1b0" stroke-width="4"/><circle cx="129" cy="280" r="6" fill="#40df50"/>
          <path d="M303 353l30-11 30 10v40l-31 10-29-10z" fill="#9997b3"/><path d="M303 353l30 8 30-9M333 361v41" fill="none" stroke="#7d7a9c" stroke-width="2"/><path d="M376 364h35l-18 17z" fill="#3c3b50"/>
        </svg>
        <svg class="rings" viewBox="895 678 122 72"><g fill="none" stroke="#fff" stroke-width="2" shape-rendering="crispEdges"><ellipse cx="955.500" cy="714" rx="58" ry="33"/><ellipse cx="955.500" cy="714" rx="51.500" ry="28.500"/></g></svg>
        <svg class="axes" viewBox="0 0 37 46"><path d="M9 31V12" stroke="#23239f" stroke-width="1.500"/><path d="M6.500 18l2.500-9 2.500 9z" fill="#23239f"/><path d="M9 31l6-4" stroke="#3a9a43"/><path d="M13 27l3-4 6-1-3 4z" fill="#3a9a43"/><path d="M9 31l14 8" stroke="#a11b29" stroke-width="1.500"/><path d="M19 34l8 7-10-2z" fill="#a11b29"/><text x="10" y="8">Z</text><text x="23" y="22">Y</text><text x="28" y="40">X</text></svg>
        <div class="keys">
          <svg class="mouse" viewBox="0 0 30 50"><rect x=".5" y=".5" width="29" height="49" rx="12" fill="url(#gm)" stroke="#777"/><path d="M1 19h28M15 1v18" stroke="#777" stroke-width=".8"/><rect x="13" y="4" width="4" height="11" rx="2" fill="#333a42"/><path d="M15 7v4" stroke="#aaa"/></svg>
          <span class="key shift"><b><svg viewBox="0 0 30 24"><path d="M15 2L3 13h6v8h12v-8h6z" fill="none" stroke="#e7e7e7" stroke-width="2.400"/></svg>Shift</b></span><span class="key ctrl"><b>Ctrl</b></span><span class="key ctrl"><b>Alt</b></span><span class="key blank"><b></b></span>
        </div>
      </div>
      <div class="mditabs"><span class="mtab on"><svg class="ic"><use href="#fclogo"/></svg><span>5-Pieza-1 : 1*</span><svg class="x"><use href="#cls"/></svg></span><span class="mtab"><svg class="ic" viewBox="0 0 20 20"><path d="M1 3h18v14H1zM1 6.500h18M1 10h18M1 13.500h18M7 3v14" fill="#eee" stroke="#555" stroke-width="1.400"/></svg><span>LongTubo*</span><svg class="x"><use href="#cls"/></svg></span></div>
    </section>
  </main>
</div>
<div class="desktop"><i class="bluebar"></i><i class="spot a"></i><i class="spot b"></i></div>
<svg class="cursor" viewBox="0 0 14 20"><path d="M2 1v15l3-3 3 6 3-1.500-3-5.500h5z" fill="#222" stroke="#ddd"/></svg>
</body>
</html>
```
FILE: styles.css
```css
* { box-sizing: border-box; }
body { margin: 0; width: 1409px; height: 807px; overflow: hidden; display: flex; background: #eeeeed; font: 11px/16px "DejaVu Sans", sans-serif; color: #111; position: relative; }
.defs { position: absolute; }
i { display: block; flex: none; }
svg { flex: none; display: block; }
.window { width: 1407px; height: 807px; background: #eeeeec; border-right: 1px solid #a9a9a7; border-top-right-radius: 9px; display: flex; flex-direction: column; flex: none; }
.titlebar { height: 34px; flex: none; background: #f5f5f3; display: flex; align-items: center; justify-content: center; position: relative; color: #858582; padding: 0 2px 1px 0; border-radius: 0 8px 0 0; }
.title { font-size: 10px; }
.winbtns { position: absolute; right: 11px; top: 9px; width: 80px; height: 14px; fill: none; stroke: #8b8b89; }
.menubar { height: 20px; flex: none; border-top: 1px solid #d0d0cc; border-bottom: 1px solid #d0d0cc; display: flex; gap: 13.800px; padding: 2px 0 0 8px; white-space: nowrap; }
.menubar u { text-underline-offset: 2px; text-decoration-thickness: 1px; }
.toolbar { height: 32px; flex: none; border-bottom: 1px solid #b3b3b0; background: linear-gradient(#fafaf9, #eeeeec); display: flex; align-items: center; padding-top: 1px; }
.toolbar.t3 { height: 31px; padding-top: 2px; }
.toolbar svg { width: 29px; height: 20px; }
.toolbar .sep { width: 3px; height: 17px; margin-left: 2px; border-left: 1px solid #d0d0cd; background: linear-gradient(90deg, #fff 1px, transparent 1px); }
.grip { width: 5px; height: 18px; margin: 0 3px 0 4px; background: radial-gradient(circle, #b6b6b3 .8px, transparent 1px) 0 0 / 3px 3px; }
.grip.first { margin: 0 2.500px 0 1px; }
.arr { width: 10px; height: 8px; background: #555753; clip-path: polygon(13% 22%, 87% 22%, 50% 78%); }
.arr.off { background: #c2c2c0; }
.combo { width: 164px; height: 24px; border: 1px solid #9b9c99; border-radius: 3px; background: linear-gradient(#fefefe, #ededeb); display: flex; align-items: center; padding: 0 6px 0 0; }
.toolbar .combo svg { width: 25px; height: 16px; }
.combo span { flex: 1; }
.pressed { height: 28px; width: 28.500px; border: 1px solid #a5a5a2; border-radius: 3px; background: #d5d5d2; display: flex; align-items: center; justify-content: center; }
.drop { width: 10.500px; }
.main { display: flex; flex: 1; min-height: 0; }
.dock { width: 500px; display: flex; flex-direction: column; flex: none; }
.docktitle { height: 19px; display: flex; justify-content: space-between; align-items: flex-start; padding: 3px 1px 0 3px; }
.dockbtns { width: 24px; height: 10px; margin-top: 1px; }
.tabs { height: 22px; display: flex; align-items: flex-end; }
.tab { text-align: center; border: 1px solid #b4b5b1; border-bottom: 0; border-radius: 3px 3px 0 0; }
.tab.on { width: 60px; height: 23px; margin-bottom: -1px; border-left: 0; background: #fbfbfa; line-height: 22px; padding-right: 1px; position: relative; }
.tab.off { width: 59px; height: 21px; background: #e6e6e3; line-height: 20px; margin-bottom: 1px; height: 20px; }
.pane { flex: 1; min-height: 0; border: 1px solid #aeafab; border-left: 0; background: #fbfbfa; padding: 1px 1px 0 1px; display: flex; flex-direction: column; }
.tree { height: 285px; flex: none; border: 1px solid #a6a7a3; background: #fff; width: 497px; }
.treehead { height: 16px; background: #eeeeec; display: flex; line-height: 17px; }
.treehead span { background: linear-gradient(#fafaf9, #e8e8e5); border-bottom: 1px solid #c7c8c4; }
.h1 { width: 137px; padding-left: 1px; border-right: 1px solid #c7c8c4; }
.h2 { width: 89px; padding-left: 1px; }
.app { height: 14px; line-height: 15px; padding-left: 3px; }
.node { height: 16px; display: flex; align-items: center; position: relative; line-height: 17px; letter-spacing: .1px; }
.ic { width: 14px; height: 14px; margin-right: 6px; }
.n1 { padding-left: 20px; }
.n2 { padding-left: 37px; }
.n3 { padding-left: 54px; }
.node .tri { position: absolute; left: 4px; }
.node.n2 .tri { left: 21px; }
.node.n3 .tri { left: 38px; }
.tri { width: 8px; height: 8px; background: #656663; clip-path: polygon(20% 5%, 75% 50%, 20% 95%); }
.tri.down { clip-path: polygon(5% 20%, 95% 20%, 50% 75%); }
.sel { background: #3790bf; color: #fff; width: 226px; }
.dim { color: #bdbdbc; }
.bodyrow { background: linear-gradient(#e6e5f4, #e6e5f4) 34px 0 / 103px 16px no-repeat; }
.splith { height: 3px; flex: none; width: 17px; margin-left: 241px; background: radial-gradient(circle, #b5b5b2 .7px, transparent 1px) 0 0 / 3px 3px; }
.props { height: 303px; flex: none; border: 1px solid #a6a7a3; padding: 1px 1px 1px 1px; display: flex; width: 498px; margin-left: 0; }
.grid { flex: 1; min-width: 0; overflow: hidden; border: 1px solid #a6a7a3; border-right: 0; background: #fff; }
.row { height: 19px; display: flex; line-height: 19px; white-space: nowrap; }
.row i { width: 17px; }
.row i.tri { width: 8px; height: 8px; margin: 5px 5px 0 4px; }
.row .k { width: 72px; padding-left: 3px; border-right: 1px solid #c7c8c5; border-bottom: 1px solid #c7c8c5; overflow: hidden; }
.row .v { flex: 1; padding-left: 3px; border-bottom: 1px solid #c7c8c5; overflow: hidden; }
.row.head { height: 16px; line-height: 17px; background: linear-gradient(#fafaf9, #e8e8e5); }
.row.head .k { width: 89px; padding-left: 1px; }
.row.head .v { padding-left: 1px; }
.group { background: #9e9e9c; color: #fff; font-weight: bold; padding-left: 3px; border-bottom: 1px solid #c7c8c5; }
.alt { background: #f7f7f6; }
.row .expr { color: #1515b8; letter-spacing: .05px; }
.scroll { width: 13px; border: 1px solid #b4b5b2; display: flex; flex-direction: column; }
.up, .dn { height: 11px; background: #565854; clip-path: polygon(2px 8px, 5.500px 4px, 9px 8px); }
.dn { clip-path: polygon(2px 4px, 5.500px 8px, 9px 4px); }
.thumb { height: 214px; border-top: 1px solid #b4b5b2; border-bottom: 1px solid #b4b5b2; background: linear-gradient(90deg, #fbfbfb, #eaeae8); }
.rest { flex: 1; background: #e1e1e0; border-bottom: 1px solid #b4b5b2; }
.btabs { display: flex; align-items: flex-start; height: 23px; }
.btab { width: 49px; height: 20px; border: 1px solid #b4b5b1; border-top: 0; border-radius: 0 0 3px 3px; background: #e7e7e4; text-align: center; line-height: 21px; }
.btab.on { width: 52px; height: 22px; background: #fcfcfb; line-height: 22px; }
.splitv { width: 5px; flex: none; background: radial-gradient(circle, #bababa .7px, transparent 1px) 1px 322px / 3px 3px; -webkit-mask: linear-gradient(#000, #000) 0 321px / 5px 18px no-repeat; }
.mdi { flex: 1; min-width: 0; display: flex; flex-direction: column; margin-top: 1px; }
.view { height: 631px; flex: none; position: relative; background: linear-gradient(#343163, #9694a5); }
.navcube { position: absolute; left: 750px; top: 0; width: 154px; height: 150px; }
.face { font: bold 21px "DejaVu Sans", sans-serif; fill: #41435a; letter-spacing: -5px; }
.rings { position: absolute; left: 390px; top: 528px; width: 122px; height: 72px; }
.axes { position: absolute; left: 861px; top: 569px; width: 37px; height: 46px; font: bold 9px "DejaVu Sans", sans-serif; }
.keys { position: absolute; left: 441px; top: 566px; width: 400px; height: 60px; background: #000; padding: 5px; display: flex; gap: 5px; box-shadow: 0 5px 12px rgba(0, 0, 0, .2); z-index: 2; }
.mouse { width: 30px; height: 50px; }
.key { height: 50px; background: #e4e4e4; border-radius: 4px; padding: 3px 6px 7px; display: flex; }
.key b { flex: 1; background: #f8f8f7; border-radius: 4px; font-size: 22px; color: #e5e5e5; display: flex; align-items: center; justify-content: center; padding-top: 2px; }
.key b svg { width: 30px; height: 24px; margin-right: 6px; }
.shift { width: 117px; }
.ctrl { width: 84px; }
.blank { width: 55px; }
.mditabs { flex: 1; border-top: 1px solid #a9a9a6; display: flex; align-items: flex-start; }
.mtab { width: 120px; height: 23px; background: #dededb; border: 1px solid #b8b9b5; border-top: 0; border-radius: 0 0 3px 3px; display: flex; align-items: center; padding: 1px 0 0 9px; letter-spacing: .1px; }
.mtab.on { width: 134px; height: 25px; background: #f5f5f3; }
.mtab .ic { margin-right: 4px; }
.mtab .x { width: 13px; height: 13px; margin-left: 5px; }
.desktop { width: 2px; position: relative; background: #f0f0ee; }
.bluebar { position: absolute; left: -1px; top: 24px; width: 3px; height: 46px; background: #268fc2; }
.spot { position: absolute; left: 0; width: 2px; height: 6px; top: 592px; background: #75bfd8; }
.spot.b { top: 608px; height: 12px; background: #38a7c9; }
.cursor { position: absolute; left: 176px; top: 698px; width: 14px; height: 20px; }
```
